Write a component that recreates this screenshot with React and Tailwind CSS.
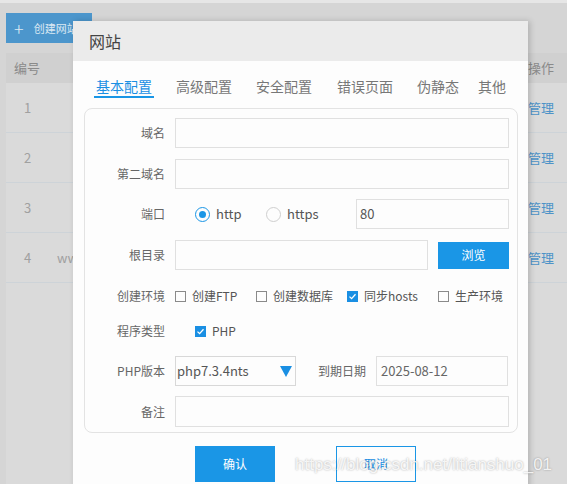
import React from "react";

function Radio({ checked }) {
  return checked ? (
    <span className="w-[15px] h-[15px] rounded-full border border-[#1a96e6] flex items-center justify-center shrink-0">
      <span className="w-[7px] h-[7px] rounded-full bg-[#1a96e6]" />
    </span>
  ) : (
    <span className="w-[15px] h-[15px] rounded-full border border-[#cfcfcf] shrink-0" />
  );
}

function Check({ checked }) {
  return checked ? (
    <span className="w-[11px] h-[11px] bg-[#1a8fe3] flex items-center justify-center shrink-0">
      <svg width="9" height="9" viewBox="0 0 9 9">
        <path d="M1.5 4.6 L3.6 6.6 L7.5 2.2" fill="none" stroke="white" strokeWidth="1.3" />
      </svg>
    </span>
  ) : (
    <span className="w-[11px] h-[11px] border border-[#8a8a8a] shrink-0" />
  );
}

function Label({ children }) {
  return (
    <div className="w-[80px] text-right text-[12px] text-[#666] leading-[30px] shrink-0">{children}</div>
  );
}

export default function App() {
  return (
    <div className="relative w-[567px] h-[484px] overflow-hidden bg-[#d5d5d5] flex flex-col font-['Noto_Sans_CJK_SC','Liberation_Sans',sans-serif]">
      {/* background page */}
      <div className="h-[3px] bg-[#e6e6e6] shrink-0" />
      <div className="pl-[6px] flex-1 flex flex-col">
        <div className="mt-[10px] h-[30px] w-[86px] bg-[#4c96cc] flex items-center pl-[8px] gap-[10px] text-[#dce9f3]">
          <span className="text-[18px] leading-none font-light">+</span>
          <span className="text-[11px]">创建网站</span>
        </div>
        <div className="mt-[10px] flex-1 bg-[#dadada]">
          <div className="h-[30px] bg-[#d0d0d0] flex items-center text-[13px] text-[#8a8a8a]">
            <div className="w-[60px] pl-[8px]">编号</div>
            <div className="flex-1" />
            <div className="w-[39px]">操作</div>
          </div>
          {["1", "2", "3", "4"].map((n, i) => (
            <div key={n} className="h-[50px] border-b border-[#cdd3d8] flex items-center text-[13px] text-[#a0a0a0]">
              <div className="w-[51px] pl-[18px]">{n}</div>
              <div className="flex-1">{i === 3 ? "ww" : null}</div>
              <div className="w-[39px] text-[#4d93c8]">管理</div>
            </div>
          ))}
        </div>
      </div>

      {/* modal */}
      <div className="absolute left-[73px] top-[21px] w-[455px] h-[470px] bg-[#fdfdfd] shadow-[2px_0_6px_rgba(0,0,0,0.18)]">
        <div className="h-[40px] bg-[#ebebeb] flex items-center pl-[16px] text-[16px] text-[#444]">网站</div>
        <div className="h-[47px] pt-[16px] pl-[21px] flex items-start text-[14px] text-[#777]">
          <div className="px-[2px] leading-[18px] pb-[1px] border-b-2 border-[#1a96e6] text-[#1a8fe3]">基本配置</div>
          <div className="ml-[20px] px-[2px] leading-[18px]">高级配置</div>
          <div className="ml-[20px] px-[2px] leading-[18px]">安全配置</div>
          <div className="ml-[21px] px-[2px] leading-[18px]">错误页面</div>
          <div className="ml-[20px] px-[2px] leading-[18px]">伪静态</div>
          <div className="ml-[15px] px-[2px] leading-[18px]">其他</div>
        </div>

        <div className="ml-[11px] w-[434px] border border-[#e3e3e3] rounded-[8px] pt-[9px] pb-[5px]">
          <div className="flex items-center h-[30px]">
            <Label>域名</Label>
            <div className="ml-[10px] w-[334px] h-[30px] border border-[#e0e0e0]" />
          </div>
          <div className="flex items-center h-[30px] mt-[11px]">
            <Label>第二域名</Label>
            <div className="ml-[10px] w-[334px] h-[30px] border border-[#e0e0e0]" />
          </div>
          <div className="flex items-center h-[30px] mt-[10px]">
            <Label>端口</Label>
            <div className="ml-[30px] w-[71px] flex items-center gap-[6px] text-[13px] text-[#555]">
              <Radio checked />
              <span>http</span>
            </div>
            <div className="w-[90px] flex items-center gap-[6px] text-[13px] text-[#555]">
              <Radio />
              <span>https</span>
            </div>
            <div className="w-[153px] h-[30px] border border-[#e0e0e0] flex items-center pl-[3px] text-[13px] text-[#555]">80</div>
          </div>
          <div className="flex items-center h-[30px] mt-[11px]">
            <Label>根目录</Label>
            <div className="ml-[10px] w-[253px] h-[30px] border border-[#e0e0e0]" />
            <div className="ml-[10px] w-[71px] h-[27px] bg-[#1a96e6] text-white text-[12px] flex items-center justify-center">浏览</div>
          </div>
          <div className="flex items-center h-[30px] mt-[11px] text-[12px] text-[#555]">
            <Label>创建环境</Label>
            <div className="ml-[10px] w-[81px] flex items-center gap-[6px]">
              <Check />
              <span>创建FTP</span>
            </div>
            <div className="w-[91px] flex items-center gap-[6px]">
              <Check />
              <span>创建数据库</span>
            </div>
            <div className="w-[91px] flex items-center gap-[6px]">
              <Check checked />
              <span>同步hosts</span>
            </div>
            <div className="flex items-center gap-[6px]">
              <Check />
              <span>生产环境</span>
            </div>
          </div>
          <div className="flex items-center h-[30px] mt-[5px] text-[12px] text-[#555]">
            <Label>程序类型</Label>
            <div className="ml-[30px] flex items-center gap-[6px]">
              <Check checked />
              <span>PHP</span>
            </div>
          </div>
          <div className="flex items-center h-[30px] mt-[10px]">
            <Label>PHP版本</Label>
            <div className="ml-[10px] w-[121px] h-[30px] border border-[#d8d8d8] flex items-center justify-between pl-[1px] pr-[3px] text-[13px] text-[#555]">
              <span>php7.3.4nts</span>
              <svg width="12" height="11" viewBox="0 0 12 11">
                <polygon points="0,0 12,0 6,11" fill="#1a8fe3" />
              </svg>
            </div>
            <div className="ml-[22px] text-[12px] text-[#666]">到期日期</div>
            <div className="ml-[10px] w-[132px] h-[30px] border border-[#e0e0e0] flex items-center pl-[4px] text-[13px] text-[#666]">2025-08-12</div>
          </div>
          <div className="flex items-center h-[31px] mt-[10px]">
            <Label>备注</Label>
            <div className="ml-[10px] w-[334px] h-[31px] border border-[#e0e0e0]" />
          </div>
        </div>

        <div className="mt-[13px] pl-[122px] flex gap-[61px]">
          <div className="w-[80px] h-[36px] bg-[#1a96e6] text-white text-[12px] flex items-center justify-center">确认</div>
          <div className="w-[80px] h-[36px] border border-[#1a96e6] text-[#1a8fe3] text-[12px] flex items-center justify-center">取消</div>
        </div>
      </div>

      {/* watermark */}
      <div className="absolute left-[295px] top-[452px] text-[17px] font-['Liberation_Sans',sans-serif] text-[rgba(255,255,255,0.85)] [text-shadow:0_0_2px_rgba(0,0,0,0.35)]">
        https://blog.csdn.net/litianshuo_01
      </div>
    </div>
  );
}
